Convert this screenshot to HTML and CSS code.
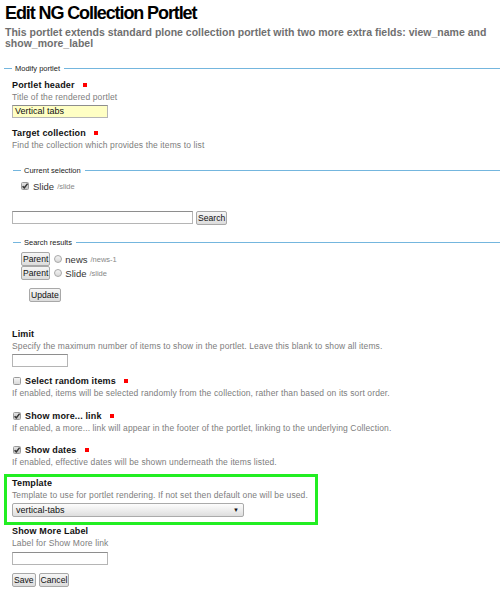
FILE: index.html
```html
<!DOCTYPE html>
<html>
<head>
<meta charset="utf-8">
<link rel="stylesheet" href="styles.css">
</head>
<body>
<h1 class="title">Edit NG Collection Portlet</h1>
<p class="lead">This portlet extends standard plone collection portlet with two more extra fields: view_name and show_more_label</p>

<div class="fs">
  <div class="legend"><span>Modify portlet</span></div>
  <div class="fs-body">

    <div class="field f-first">
      <div class="lbl">Portlet header <i class="req"></i></div>
      <div class="desc">Title of the rendered portlet</div>
      <div class="inp inp-yellow w96">Vertical tabs</div>
    </div>

    <div class="field f-target">
      <div class="lbl">Target collection <i class="req"></i></div>
      <div class="desc">Find the collection which provides the items to list</div>
    </div>

    <div class="fs sub sub-current">
      <div class="legend"><span>Current selection</span></div>
      <div class="sub-body">
        <div class="sel-row">
          <span class="cb on"><svg viewBox="0 0 8 8"><path d="M1.6 4.2 L3.3 5.9 L6.6 1.6" fill="none" stroke="#333" stroke-width="1.5"/></svg></span>
          <span class="item">Slide</span> <span class="path">/slide</span>
        </div>
      </div>
    </div>

    <div class="search-row">
      <div class="inp w181"></div>
      <span class="btn">Search</span>
    </div>

    <div class="fs sub sub-results">
      <div class="legend"><span>Search results</span></div>
      <div class="sub-body">
        <div class="res-row"><span class="btn">Parent</span><span class="radio"></span><span class="item">news</span> <span class="path">/news-1</span></div>
        <div class="res-row"><span class="btn">Parent</span><span class="radio"></span><span class="item">Slide</span> <span class="path">/slide</span></div>
        <div class="upd-row"><span class="btn">Update</span></div>
      </div>
    </div>

    <div class="field f-limit">
      <div class="lbl">Limit</div>
      <div class="desc">Specify the maximum number of items to show in the portlet. Leave this blank to show all items.</div>
      <div class="inp w56"></div>
    </div>

    <div class="field cfield f-random">
      <div class="lbl"><span class="cb"></span>Select random items <i class="req"></i></div>
      <div class="desc">If enabled, items will be selected randomly from the collection, rather than based on its sort order.</div>
    </div>

    <div class="field cfield f-more">
      <div class="lbl"><span class="cb on"><svg viewBox="0 0 8 8"><path d="M1.6 4.2 L3.3 5.9 L6.6 1.6" fill="none" stroke="#333" stroke-width="1.5"/></svg></span>Show more... link <i class="req"></i></div>
      <div class="desc">If enabled, a more... link will appear in the footer of the portlet, linking to the underlying Collection.</div>
    </div>

    <div class="field cfield f-dates">
      <div class="lbl"><span class="cb on"><svg viewBox="0 0 8 8"><path d="M1.6 4.2 L3.3 5.9 L6.6 1.6" fill="none" stroke="#333" stroke-width="1.5"/></svg></span>Show dates <i class="req"></i></div>
      <div class="desc">If enabled, effective dates will be shown underneath the items listed.</div>
    </div>

    <div class="field highlight">
      <div class="lbl">Template</div>
      <div class="desc">Template to use for portlet rendering. If not set then default one will be used.</div>
      <div class="select"><span>vertical-tabs</span><span class="arrow">&#9660;</span></div>
    </div>

    <div class="field f-label">
      <div class="lbl">Show More Label</div>
      <div class="desc">Label for Show More link</div>
      <div class="inp w96 inp-lbl"></div>
    </div>

    <div class="actions">
      <span class="btn">Save</span><span class="btn">Cancel</span>
    </div>

  </div>
</div>
</body>
</html>
```
FILE: styles.css
```css
html, body { background: #fff; }
body {
  margin: 0;
  padding: 2px 0 0 4px;
  font-family: "Liberation Sans", Arial, sans-serif;
  color: #111;
}
.title {
  margin: 0 0 0 1px;
  font-size: 18px;
  line-height: 22px;
  letter-spacing: -1.1px;
  font-weight: bold;
  color: #000;
}
.lead {
  margin: 2.5px 0 0 1px;
  font-size: 10.5px;
  line-height: 11px;
  font-weight: bold;
  color: #6f6f6f;
  width: 492px;
}
.fs { margin-top: 14.5px; }
.legend {
  display: flex;
  align-items: center;
  height: 10px;
  font-size: 7.5px;
  color: #222;
}
.legend::before {
  content: "";
  width: 8px;
  border-top: 1px solid #74b6de;
  margin-right: 3px;
}
.legend::after {
  content: "";
  flex: 1;
  border-top: 1px solid #74b6de;
  margin-left: 4px;
}
.fs-body { padding-left: 8px; }
.sub { margin-left: 1px; }
.sub-body { padding-left: 8px; }

.lbl {
  display: flex;
  align-items: center;
  height: 12px;
  font-size: 9px;
  font-weight: bold;
  letter-spacing: 0.15px;
  color: #111;
  white-space: nowrap;
}
.req {
  display: inline-block;
  width: 4px;
  height: 4px;
  background: #f00;
  margin-left: 8px;
}
.desc {
  font-size: 8.5px;
  line-height: 13px;
  letter-spacing: 0.12px;
  color: #7d7d7d;
  white-space: nowrap;
}
.inp {
  box-sizing: border-box;
  height: 13px;
  margin-top: 1px;
  border: 1px solid #b5b5b5;
  border-top-color: #8e8e8e;
  background: #fff;
  font-size: 9px;
  line-height: 11px;
  padding-left: 2px;
  color: #111;
}
.inp-yellow { background: #ffffc4; }
.w96 { width: 96px; }
.w181 { width: 181px; }
.w56 { width: 56px; }

.f-first { margin-top: 6px; }
.f-target { margin-top: 9px; }
.sub-current { margin-top: 13px; }
.sel-row {
  display: flex;
  align-items: center;
  height: 12px;
  margin-top: 5px;
}
.cb {
  box-sizing: border-box;
  display: inline-block;
  width: 8px;
  height: 8px;
  border: 1px solid #9a9a9a;
  border-radius: 1.5px;
  background: linear-gradient(#f4f4f4, #dadada);
  margin-right: 4px;
  position: relative;
  flex: none;
}
.cb.on { background: linear-gradient(#e2e2e2, #c4c4c4); }
.cb svg {
  position: absolute;
  left: -1px;
  top: -1px;
  width: 8px;
  height: 8px;
}
.item { font-size: 9.5px; color: #333; }
.path { font-size: 7.5px; color: #888; margin-left: 3px; }
.search-row {
  display: flex;
  align-items: flex-start;
  gap: 3px;
  margin-top: 19px;
  height: 14px;
}
.search-row .inp { margin-top: 0; }
.btn {
  box-sizing: border-box;
  display: inline-flex;
  align-items: center;
  justify-content: center;
  height: 14px;
  padding: 0 1px;
  border: 1px solid #a8a8a8;
  border-radius: 2px;
  background: linear-gradient(#f6f6f6, #dcdcdc);
  font-size: 8.6px;
  color: #111;
}
.sub-results { margin-top: 12px; }
.res-row {
  display: flex;
  align-items: center;
  height: 14px;
}
.res-row:first-of-type { margin-top: 5px; }
.radio {
  box-sizing: border-box;
  display: inline-block;
  width: 8px;
  height: 8px;
  border-radius: 50%;
  border: 1px solid #a8a8a8;
  background: linear-gradient(#f4f4f4, #d8d8d8);
  margin: 0 3px 0 4px;
}
.upd-row { margin-top: 8px; padding-left: 8px; height: 14px; display: flex; }

.f-limit { margin-top: 26px; }
.cfield .lbl { height: 13px; }
.f-random { margin-top: 7px; }
.f-more { margin-top: 9px; }
.f-dates { margin-top: 8px; }
.cfield .cb { margin-left: 1px; }

.highlight {
  box-sizing: border-box;
  width: 314px;
  margin: 5px 0 0 -8px;
  border: 3px solid #22ee22;
  padding: 0 0 5px 5px;
}
.select {
  box-sizing: border-box;
  width: 232px;
  height: 14px;
  margin-top: 1px;
  border: 1px solid #aaa;
  border-radius: 2px;
  background: linear-gradient(#fdfdfd, #dedede);
  display: flex;
  align-items: center;
  justify-content: space-between;
  padding: 0 4px 0 3px;
  font-size: 9px;
  color: #111;
}
.arrow { font-size: 6px; color: #111; }
.f-label { margin-top: 0; }
.inp-lbl { margin-top: 1.5px; }
.actions {
  display: flex;
  gap: 3px;
  margin-top: 8px;
}
```
